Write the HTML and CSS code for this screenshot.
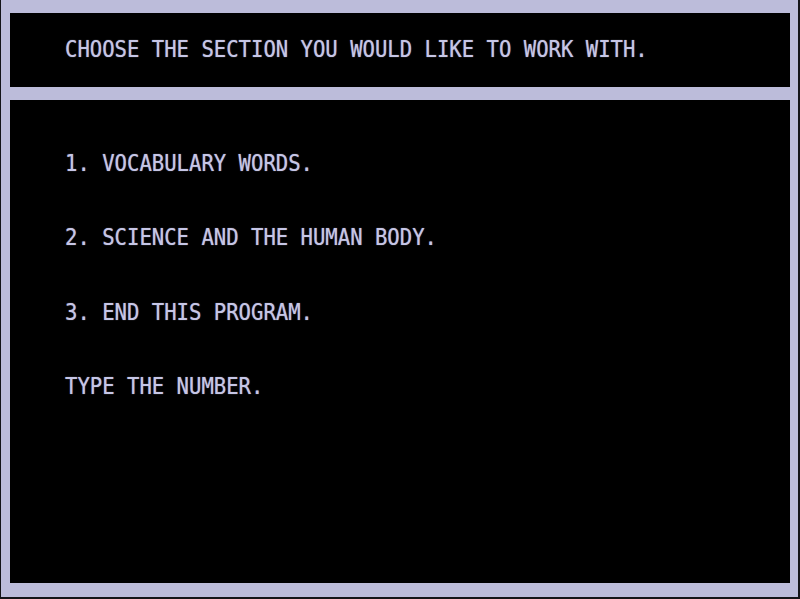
FILE: index.html
```html
<!DOCTYPE html>
<html lang="en">
<head>
<meta charset="utf-8">
<title>Section Menu</title>
<link rel="stylesheet" href="styles.css">
</head>
<body>
  <div class="screen">
    <header class="panel title-panel">
      <p class="line">CHOOSE THE SECTION YOU WOULD LIKE TO WORK WITH.</p>
    </header>
    <main class="panel menu-panel">
      <p class="line">1. VOCABULARY WORDS.</p>
      <p class="line">2. SCIENCE AND THE HUMAN BODY.</p>
      <p class="line">3. END THIS PROGRAM.</p>
      <p class="line">TYPE THE NUMBER.</p>
    </main>
  </div>
</body>
</html>
```

FILE: styles.css
```css
html, body {
  margin: 0;
  padding: 0;
  background: #141418;
}

body {
  width: 800px;
  height: 599px;
  overflow: hidden;
}

/* lavender frame around the two black panels */
.screen {
  box-sizing: border-box;
  margin: 0 2px 2px 1px;
  height: 597px;
  padding: 13px 8px 14px 9px;
  background: #bcbcda;
  display: grid;
  grid-template-rows: 74px 1fr;
  row-gap: 13px;
}

.panel {
  background: #000;
  box-sizing: border-box;
  padding-left: 55px;
  font-family: "DejaVu Sans Mono", "Liberation Mono", monospace;
  font-size: 20.6px;
  line-height: 24px;
  color: #c6c6e6;
  text-shadow: 0 0 1px rgba(198, 198, 230, 0.7);
}

/* character cells are a little taller than the font's own proportions */
.line {
  margin: 0;
  white-space: pre;
  transform: scaleY(1.1);
  transform-origin: 0 50%;
}

.title-panel {
  padding-top: 24px;
}

.menu-panel {
  padding-top: 51px;
  display: flex;
  flex-direction: column;
  gap: 50.3px;
}
```
